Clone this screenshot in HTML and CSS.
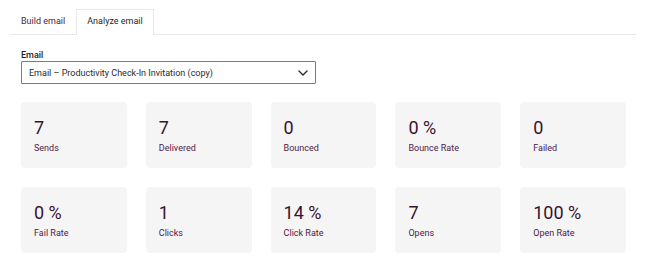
FILE: index.html
```html
<!DOCTYPE html>
<html lang="en">
<head>
  <meta charset="UTF-8" />
  <meta name="viewport" content="width=device-width, initial-scale=1.0"/>
  <title>Analyze email</title>
  <link rel="stylesheet" href="styles.css">
</head>
<body>
  <div class="page">
    <div class="tabs">
      <a class="tab" href="#">Build email</a>
      <a class="tab tab-active" href="#">Analyze email</a>
    </div>

    <div class="panel">
      <label class="field-label">Email</label>
      <div class="select-box">
        <span class="select-value">Email – Productivity Check-In Invitation (copy)</span>
        <svg class="chevron" width="10" height="6" viewBox="0 0 10 6">
          <path d="M1 1 L5 5 L9 1" fill="none" stroke="#2b2b2b" stroke-width="1.4" stroke-linecap="round" stroke-linejoin="round"/>
        </svg>
      </div>

      <div class="stats">
        <div class="stat"><div class="stat-value">7</div><div class="stat-label">Sends</div></div>
        <div class="stat"><div class="stat-value">7</div><div class="stat-label">Delivered</div></div>
        <div class="stat"><div class="stat-value">0</div><div class="stat-label">Bounced</div></div>
        <div class="stat"><div class="stat-value">0 %</div><div class="stat-label">Bounce Rate</div></div>
        <div class="stat"><div class="stat-value">0</div><div class="stat-label">Failed</div></div>
        <div class="stat"><div class="stat-value">0 %</div><div class="stat-label">Fail Rate</div></div>
        <div class="stat"><div class="stat-value">1</div><div class="stat-label">Clicks</div></div>
        <div class="stat"><div class="stat-value">14 %</div><div class="stat-label">Click Rate</div></div>
        <div class="stat"><div class="stat-value">7</div><div class="stat-label">Opens</div></div>
        <div class="stat"><div class="stat-value">100 %</div><div class="stat-label">Open Rate</div></div>
      </div>
    </div>
  </div>
</body>
</html>
```

FILE: styles.css
```css
:root {
  --plum-dark: #3a1130;
  --plum: #4f2145;
  --line: #e8e8e8;
  --card-bg: #f5f5f5;
  --text: #1e1e1e;
}

* {
  margin: 0;
  padding: 0;
  box-sizing: border-box;
}

body {
  font-family: Roboto, 'Liberation Sans', sans-serif;
  background: #fff;
  color: var(--text);
}

.page {
  padding: 9px 10px 0;
}

/* Tabs */
.tabs {
  display: flex;
  border-bottom: 1px solid var(--line);
}

.tab {
  display: block;
  font-size: 9px;
  line-height: 12px;
  padding: 5px 10px 7px;
  border: 1px solid transparent;
  border-bottom: none;
  color: var(--plum);
  text-decoration: none;
}

.tab-active {
  color: var(--text);
  background: #fff;
  border-color: var(--line);
  margin-bottom: -1px;
  padding-bottom: 8px;
}

/* Form */
.panel {
  padding: 0 10px 0 11px;
}

.field-label {
  display: block;
  font-size: 9px;
  line-height: 12px;
  font-weight: 500;
  margin-top: 14px;
}

.select-box {
  width: 295px;
  height: 23px;
  display: flex;
  align-items: center;
  justify-content: space-between;
  padding: 0 7px;
  border: 1px solid #87748a;
  border-radius: 1px;
  font-size: 9px;
  color: #2b2b2b;
}

/* Stats */
.stats {
  display: grid;
  grid-template-columns: repeat(5, 1fr);
  gap: 19px;
  margin-top: 18px;
}

.stat {
  background: var(--card-bg);
  border-radius: 4px;
  height: 66px;
  padding: 15px 13px 0;
}

.stat-value {
  font-size: 18px;
  line-height: 21px;
  color: var(--plum-dark);
}

.stat-label {
  font-size: 9px;
  line-height: 12px;
  margin-top: 4px;
  color: var(--plum);
}
```
